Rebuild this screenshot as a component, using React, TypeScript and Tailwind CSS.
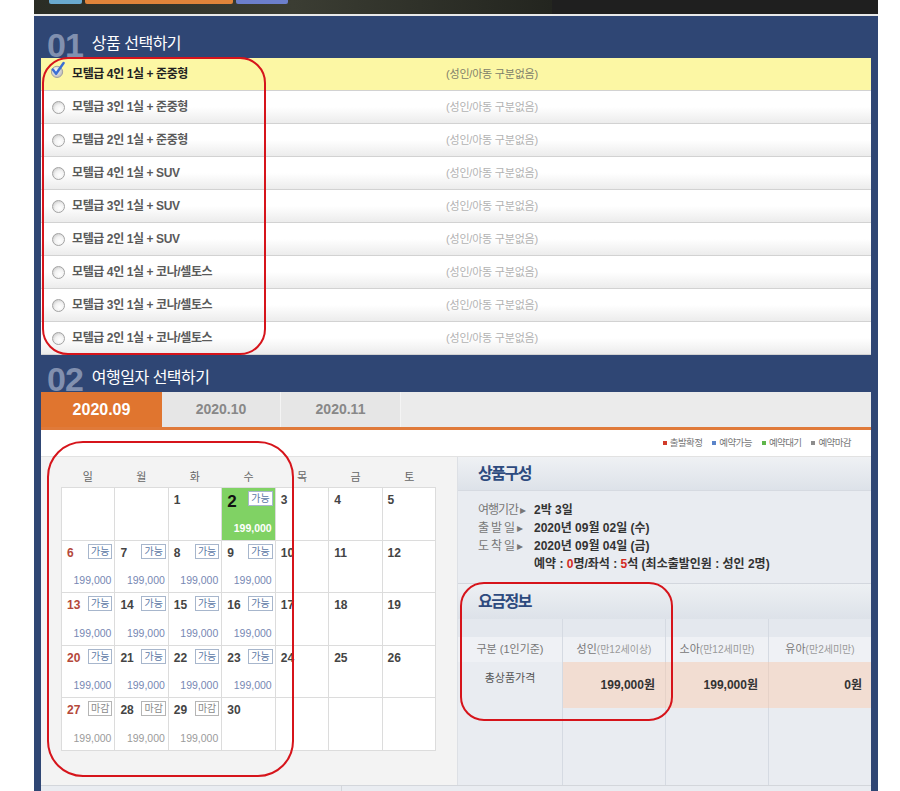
import React from "react"

const products = [
  '모텔급 4인 1실 + 준중형',
  '모텔급 3인 1실 + 준중형',
  '모텔급 2인 1실 + 준중형',
  '모텔급 4인 1실 + SUV',
  '모텔급 3인 1실 + SUV',
  '모텔급 2인 1실 + SUV',
  '모텔급 4인 1실 + 코나/셀토스',
  '모텔급 3인 1실 + 코나/셀토스',
  '모텔급 2인 1실 + 코나/셀토스',
]

const weekDays = ['일', '월', '화', '수', '목', '금', '토']

type Status = 'sel' | 'ok' | 'end' | null

function statusOf(d: number): Status {
  if (d === 2) return 'sel'
  if ((d >= 6 && d <= 9) || (d >= 13 && d <= 16) || (d >= 20 && d <= 23)) return 'ok'
  if (d >= 27 && d <= 29) return 'end'
  return null
}

// 2020년 9월: 화요일 시작
const cells: (number | null)[] = [
  null, null,
  ...Array.from({ length: 30 }, (_, i) => i + 1),
  null, null, null,
]

function Radio({ checked }: { checked?: boolean }) {
  if (checked) {
    return (
      <svg width="16" height="18" viewBox="0 0 16 18" className="-mt-[8px] -ml-[1px]">
        <defs>
          <radialGradient id="rg" cx="40%" cy="40%" r="60%">
            <stop offset="0%" stopColor="#ffffff" />
            <stop offset="100%" stopColor="#bdbdbd" />
          </radialGradient>
        </defs>
        <circle cx="7.5" cy="11" r="6" fill="url(#rg)" stroke="#9d9d9d" />
        <path d="M3 8.5 L6.5 13 L14.5 1.5" fill="none" stroke="#3b6fd4" strokeWidth="2.6" strokeLinecap="round" strokeLinejoin="round" />
      </svg>
    )
  }
  return (
    <div className="w-[13px] h-[13px] rounded-full border border-[#a3a3a3] bg-[radial-gradient(circle_at_60%_65%,#ffffff_0%,#f2f2f2_45%,#bcbcbc_100%)]" />
  )
}

function SectionHead({ num, title, h }: { num: string; title: string; h: string }) {
  return (
    <div className={`${h} flex items-end pl-[6px]`}>
      <span className="text-[34px] leading-[26px] font-bold text-[#8190af] tracking-[-1px]">{num}</span>
      <span className="ml-[9px] mb-[4px] text-[16px] leading-[20px] text-white tracking-[-0.5px]">{title}</span>
    </div>
  )
}

function DayCell({ day, col }: { day: number | null; col: number }) {
  const st = day ? statusOf(day) : null
  const sunday = col === 0
  return (
    <div
      className={`h-[52.6px] border-r border-b border-[#dcdcdc] flex flex-col ${
        st === 'sel' ? 'bg-[#80d264]' : 'bg-white'
      }`}
    >
      {day && (
        <>
          <div className="flex justify-between items-start">
            <span
              className={`pl-[5px] font-bold ${
                st === 'sel'
                  ? 'text-[17px] leading-[20px] pt-[4px] text-[#111]'
                  : `text-[12px] leading-[14px] pt-[5px] ${sunday ? 'text-[#b4483a]' : 'text-[#444]'}`
              }`}
            >
              {day}
            </span>
            {st && (
              <span
                className={`mt-[3px] mr-[2px] h-[15px] px-[2px] border bg-white text-[10px] leading-[13px] ${
                  st === 'end' ? 'border-[#b5b5b5] text-[#8a8a8a]' : 'border-[#a7b6cc] text-[#5b77a5]'
                }`}
              >
                {st === 'end' ? '마감' : '가능'}
              </span>
            )}
          </div>
          {st && (
            <div
              className={`mt-auto pr-[3px] pb-[6px] text-right text-[10.5px] leading-[12px] ${
                st === 'sel' ? 'text-white font-bold' : st === 'end' ? 'text-[#9b9b9b]' : 'text-[#7788b3]'
              }`}
            >
              199,000
            </div>
          )}
        </>
      )}
    </div>
  )
}

export default function App() {
  return (
    <div className="relative w-[900px] h-[791px] overflow-hidden bg-white font-['Liberation_Sans','Noto_Sans_CJK_KR',sans-serif]">
      <div className="ml-[34px] w-[844px]">
        {/* 상단 이미지 */}
        <div className="h-[14px] flex">
          <div className="relative w-[518px] bg-gradient-to-r from-[#2a2d25] via-[#3b3d33] to-[#23251f]">
            <div className="flex gap-[3px] pl-[15px]">
              <div className="w-[33px] h-[4px] rounded-b-[2px] bg-[#69a9cf]" />
              <div className="w-[148px] h-[4px] rounded-b-[2px] bg-[#e0843a]" />
              <div className="w-[52px] h-[4px] rounded-b-[2px] bg-[#6c7fcc]" />
            </div>
          </div>
          <div className="flex-1 bg-[#1f1f1f]" />
        </div>
        <div className="h-[2px] bg-[#e9e9e9]" />

        <div className="bg-[#2f4674] px-[7px] pb-[40px]">
          <SectionHead num="01" title="상품 선택하기" h="h-[42px]" />

          <div className="bg-white">
            {products.map((p, i) => (
              <div
                key={p}
                className={`h-[33px] flex items-center border-b border-[#d2d2d2] ${
                  i === 0 ? 'bg-[#fcf7a4]' : 'bg-gradient-to-b from-white via-white to-[#ececec]'
                }`}
              >
                <div className="w-[405px] flex items-center pl-[10px] gap-[7px]">
                  <div className="w-[14px] flex justify-center">
                    <Radio checked={i === 0} />
                  </div>
                  <span
                    className={`text-[12px] font-bold tracking-[-0.4px] ${
                      i === 0 ? 'text-[#222]' : 'text-[#5a5a5a]'
                    }`}
                  >
                    {p}
                  </span>
                </div>
                <span className={`text-[11px] tracking-[-0.2px] ${i === 0 ? 'text-[#80806a]' : 'text-[#b2b2b2]'}`}>
                  (성인/아동 구분없음)
                </span>
              </div>
            ))}
          </div>

          <SectionHead num="02" title="여행일자 선택하기" h="h-[37px]" />

          {/* 월 탭 */}
          <div className="h-[38px] flex bg-[#e6e6e6] border-b-[3px] border-[#e07a3a]">
            <div className="w-[121px] flex items-center justify-center bg-[#e0752f] text-white text-[16px] font-bold">
              2020.09
            </div>
            <div className="w-[119px] flex items-center justify-center border-r border-[#f4f4f4] text-[#888] text-[14px] font-bold">
              2020.10
            </div>
            <div className="w-[120px] flex items-center justify-center border-r border-[#f4f4f4] text-[#888] text-[14px] font-bold">
              2020.11
            </div>
            <div className="flex-1 bg-[#ebebeb]" />
          </div>

          {/* 범례 */}
          <div className="h-[27px] bg-white flex items-center justify-end pr-[20px] gap-[10px] text-[9.5px] text-[#777] tracking-[-0.6px] border-b border-[#e2e2e2]">
            <span className="flex items-center gap-[3px]"><i className="w-[4px] h-[4px] bg-[#d13b2a]" />출발확정</span>
            <span className="flex items-center gap-[3px]"><i className="w-[4px] h-[4px] bg-[#5b84c9]" />예약가능</span>
            <span className="flex items-center gap-[3px]"><i className="w-[4px] h-[4px] bg-[#5fb64a]" />예약대기</span>
            <span className="flex items-center gap-[3px]"><i className="w-[4px] h-[4px] bg-[#8d8d8d]" />예약마감</span>
          </div>

          <div className="flex h-[328px]">
            {/* 달력 */}
            <div className="w-[416px] bg-[#f3f3f3] pl-[20px]">
              <div className="w-[375px] h-[30px] grid grid-cols-7 items-end pb-[3px] text-[11px] leading-[14px] text-[#666]">
                {weekDays.map((w) => (
                  <div key={w} className="text-center">{w}</div>
                ))}
              </div>
              <div className="w-[375px] grid grid-cols-7 border-l border-t border-[#dcdcdc]">
                {cells.map((d, i) => (
                  <DayCell key={i} day={d} col={i % 7} />
                ))}
              </div>
            </div>

            {/* 상품구성 / 요금정보 */}
            <div className="flex-1 flex flex-col bg-[#e9ecf1] border-l border-[#dde0e5]">
              <div className="h-[34px] shrink-0 flex items-center pl-[20px] bg-gradient-to-b from-[#eff1f4] to-[#dde2e9] border-b border-[#d6dae1]">
                <span className="text-[16px] font-bold text-[#2d4a7e] tracking-[-1.5px]">상품구성</span>
              </div>
              <div className="h-[92px] shrink-0 pl-[20px] pt-[10px] text-[12px] leading-[18px]">
                <div className="flex">
                  <span className="w-[56px] text-[#777] tracking-[-1px]">여행기간 ▸</span>
                  <span className="font-bold text-[#333]">2박 3일</span>
                </div>
                <div className="flex">
                  <span className="w-[56px] text-[#777] tracking-[2px]">출발일▸</span>
                  <span className="font-bold text-[#333]">2020년 09월 02일 (수)</span>
                </div>
                <div className="flex">
                  <span className="w-[56px] text-[#777] tracking-[2px]">도착일▸</span>
                  <span className="font-bold text-[#333]">2020년 09월 04일 (금)</span>
                </div>
                <div className="flex">
                  <span className="w-[56px]" />
                  <span className="font-bold text-[#333]">
                    예약 : <span className="text-[#d42a1e]">0</span>명/좌석 : <span className="text-[#d42a1e]">5</span>석 (최소출발인원 : 성인 2명)
                  </span>
                </div>
              </div>
              <div className="h-[36px] shrink-0 flex items-center pl-[20px] bg-gradient-to-b from-[#edf0f3] to-[#dde2e9] border-t border-[#d3d7de]">
                <span className="text-[16px] font-bold text-[#2d4a7e] tracking-[-1.5px]">요금정보</span>
              </div>

              <div className="flex-1 flex flex-col">
                <div className="h-[18px] grid grid-cols-[105px_103px_103px_1fr] bg-[#e4e8ee]">
                  <div className="border-r border-[#d5dae2]" />
                  <div className="border-r border-[#d5dae2]" />
                  <div className="border-r border-[#d5dae2]" />
                  <div />
                </div>
                <div className="h-[25px] grid grid-cols-[105px_103px_103px_1fr] bg-[#eff1f5] text-[11px] text-[#777] items-stretch">
                  <div className="border-r border-[#d5dae2] flex items-center justify-center">구분 (1인기준)</div>
                  <div className="border-r border-[#d5dae2] flex items-center justify-center">
                    성인<span className="text-[10px] text-[#9a9a9a]">(만12세이상)</span>
                  </div>
                  <div className="border-r border-[#d5dae2] flex items-center justify-center">
                    소아<span className="text-[10px] text-[#9a9a9a]">(만12세미만)</span>
                  </div>
                  <div className="flex items-center justify-center">
                    유아<span className="text-[10px] text-[#9a9a9a]">(만2세미만)</span>
                  </div>
                </div>
                <div className="h-[46px] grid grid-cols-[105px_103px_103px_1fr] text-[12px] font-bold text-[#333]">
                  <div className="border-r border-[#d5dae2] bg-[#e9ecf1] flex justify-center pt-[8px] text-[11px] font-normal text-[#555]">
                    총상품가격
                  </div>
                  <div className="border-r border-[#e6d2c8] bg-[#f2ddd2] flex items-center justify-end pr-[10px]">199,000원</div>
                  <div className="border-r border-[#e6d2c8] bg-[#f2ddd2] flex items-center justify-end pr-[10px]">199,000원</div>
                  <div className="bg-[#f2ddd2] flex items-center justify-end pr-[9px]">0원</div>
                </div>
                <div className="flex-1 grid grid-cols-[105px_103px_103px_1fr]">
                  <div className="border-r border-[#d5dae2]" />
                  <div className="border-r border-[#d5dae2]" />
                  <div className="border-r border-[#d5dae2]" />
                  <div />
                </div>
              </div>
            </div>
          </div>

          <div className="h-[20px] flex bg-[#e9ecf1] border-t border-[#d3d6db]">
            <div className="w-[301px] border-r border-[#d3d6db]" />
          </div>
        </div>
      </div>

      {/* 빨간 표시 */}
      <div className="absolute left-[42px] top-[57px] w-[224px] h-[298px] rounded-[26px] border-2 border-[#d6141b]" />
      <div className="absolute left-[47px] top-[441px] w-[247px] h-[336px] rounded-[36px] border-2 border-[#d6141b]" />
      <div className="absolute left-[460px] top-[582px] w-[213px] h-[139px] rounded-[24px] border-2 border-[#d6141b]" />
    </div>
  )
}
